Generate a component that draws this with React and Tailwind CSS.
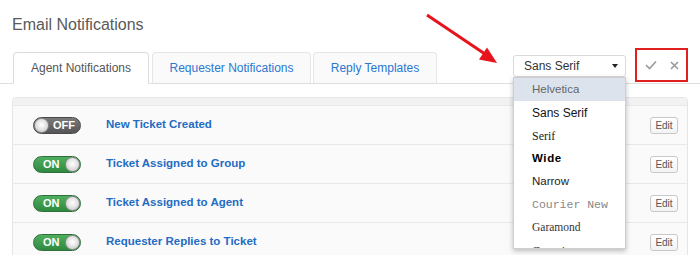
import React from "react";

const rows = [
  { on: false, label: "New Ticket Created" },
  { on: true, label: "Ticket Assigned to Group" },
  { on: true, label: "Ticket Assigned to Agent" },
  { on: true, label: "Requester Replies to Ticket" },
];

function Knob() {
  return (
    <span className="block w-[15px] h-[15px] rounded-full border border-[#8a8a8a] bg-[radial-gradient(circle_at_50%_45%,#ffffff_0%,#e6e6e6_45%,#b5b5b5_100%)] shadow-[inset_0_0_1px_#fff]" />
  );
}

function Toggle({ on }) {
  if (on) {
    return (
      <div className="w-[48px] h-[17px] rounded-full border border-[#2f6f3a] bg-[linear-gradient(#4fae5e,#2f8a40)] flex items-center justify-between pl-[9px] pr-0">
        <span className="text-[11px] font-bold text-white leading-none">ON</span>
        <Knob />
      </div>
    );
  }
  return (
    <div className="w-[48px] h-[17px] rounded-full border border-[#4a4a4a] bg-[linear-gradient(#7a7a7a,#555555)] flex items-center gap-[4px] pl-0">
      <Knob />
      <span className="text-[11px] font-bold text-white leading-none">OFF</span>
    </div>
  );
}

const fonts = [
  { t: "Helvetica", c: "font-['Liberation_Sans',sans-serif] text-[11.5px] text-[#666]", hl: true },
  { t: "Sans Serif", c: "font-['Liberation_Sans',sans-serif] text-[12px] text-[#111]" },
  { t: "Serif", c: "font-['Liberation_Serif',serif] text-[12px] text-[#222]" },
  { t: "Wide", c: "font-['Liberation_Sans',sans-serif] font-bold text-[11.5px] tracking-[0.6px] text-[#000]" },
  { t: "Narrow", c: "font-['Liberation_Sans_Narrow','Liberation_Sans',sans-serif] text-[11.5px] text-[#222]" },
  { t: "Courier New", c: "font-['Liberation_Mono',monospace] text-[11.5px] text-[#888]" },
  { t: "Garamond", c: "font-['Liberation_Serif',serif] text-[11.5px] text-[#333]" },
  { t: "Georgia", c: "font-['Liberation_Serif',serif] text-[12px] text-[#333]" },
];

export default function App() {
  return (
    <div className="relative w-[700px] h-[255px] overflow-hidden bg-white font-['Liberation_Sans',Arial,sans-serif]">
      <h1 className="pl-[12px] pt-[15px] text-[16px] leading-[20px] text-[#5a5a5a] font-normal">
        Email Notifications
      </h1>

      <div className="mt-[17px] h-[32px] flex items-start border-b border-[#dedede]">
        <div className="ml-[13px] -mb-px h-[32px] w-[136px] bg-white border border-[#dcdcdc] border-b-white rounded-t-[4px] flex items-center justify-center text-[12px] text-[#555]">
          Agent Notifications
        </div>
        <div className="ml-[3px] h-[31px] w-[159px] bg-[#fafafa] border border-[#e6e6e6] border-b-0 rounded-t-[4px] flex items-center justify-center text-[12px] text-[#2a78d0]">
          Requester Notifications
        </div>
        <div className="ml-[2px] h-[31px] w-[124px] bg-[#fafafa] border border-[#e6e6e6] border-b-0 rounded-t-[4px] flex items-center justify-center text-[12px] text-[#2a78d0]">
          Reply Templates
        </div>

        <div className="ml-auto mr-[12px] flex items-start">
          <div className="relative mt-[3px] w-[113px] h-[22px]">
            <div className="w-full h-full bg-white border border-[#d9d9d9] rounded-[3px] flex items-center pl-[10px] pr-[7px] text-[12px] text-[#333]">
              <span>Sans Serif</span>
              <span className="ml-auto w-0 h-0 border-l-[3.5px] border-r-[3.5px] border-t-[4px] border-l-transparent border-r-transparent border-t-[#222]" />
            </div>
            <div className="absolute left-0 top-[22px] w-[113px] h-[172px] overflow-hidden bg-white border border-[#cfcfcf] shadow-[0_2px_5px_rgba(0,0,0,0.25)] z-20">
              {fonts.map((f) => (
                <div
                  key={f.t}
                  className={`h-[23px] flex items-center pl-[18px] ${f.hl ? "bg-[#dde3ec]" : ""} ${f.c}`}
                >
                  {f.t}
                </div>
              ))}
            </div>
          </div>
          <div className="ml-[9px] -mt-[4px] w-[53px] h-[34px] border-2 border-[#e01f1f] flex items-center justify-center gap-[13px]">
            <svg width="12" height="10" viewBox="0 0 12 10">
              <polyline points="1,5 4.5,8.5 11,1.5" fill="none" stroke="#9a9a9a" strokeWidth="1.6" />
            </svg>
            <svg width="9" height="9" viewBox="0 0 9 9">
              <path d="M1 1 L8 8 M8 1 L1 8" stroke="#9a9a9a" strokeWidth="1.6" />
            </svg>
          </div>
        </div>
      </div>

      <div className="mt-[13px] mx-[12px] border border-[#e6e6e6] rounded-t-[4px] bg-[#fafafa]">
        <div className="h-[7px] bg-[#f2f2f2] rounded-t-[4px]" />
        {rows.map((r) => (
          <div key={r.label} className="h-[39px] border-t border-[#e8e8e8] flex items-center pl-[20px] pr-[9px]">
            <Toggle on={r.on} />
            <span className="ml-[25px] text-[11.5px] font-bold text-[#1f6cc4]">{r.label}</span>
            <div className="ml-auto w-[28px] h-[17px] bg-[linear-gradient(#ffffff,#f3f3f3)] border border-[#c8c8c8] rounded-[3px] flex items-center justify-center text-[10px] text-[#555]">
              Edit
            </div>
          </div>
        ))}
      </div>

      <svg className="absolute left-0 top-0 pointer-events-none z-30" width="700" height="255">
        <line x1="427" y1="15" x2="485" y2="54" stroke="#e8141b" strokeWidth="3" />
        <polygon points="497,63 479,59.5 487,47.5" fill="#e8141b" />
      </svg>
    </div>
  );
}
